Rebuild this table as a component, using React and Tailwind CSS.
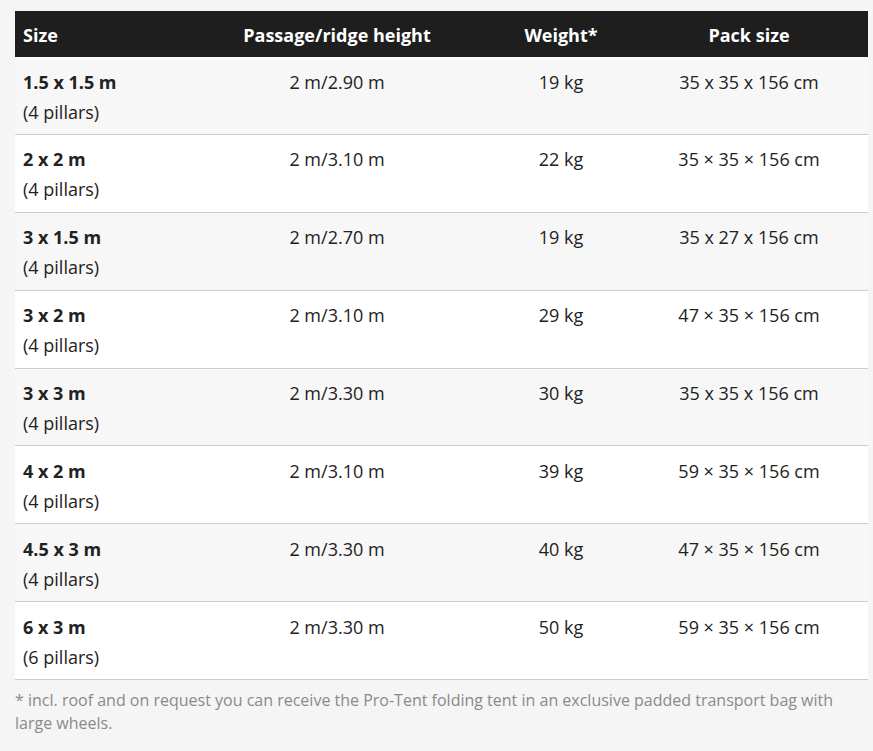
import React from "react"

const rows = [
  { size: '1.5 x 1.5 m', pillars: '(4 pillars)', height: '2 m/2.90 m', weight: '19 kg', pack: '35 x 35 x 156 cm' },
  { size: '2 x 2 m', pillars: '(4 pillars)', height: '2 m/3.10 m', weight: '22 kg', pack: '35 × 35 × 156 cm' },
  { size: '3 x 1.5 m', pillars: '(4 pillars)', height: '2 m/2.70 m', weight: '19 kg', pack: '35 x 27 x 156 cm' },
  { size: '3 x 2 m', pillars: '(4 pillars)', height: '2 m/3.10 m', weight: '29 kg', pack: '47 × 35 × 156 cm' },
  { size: '3 x 3 m', pillars: '(4 pillars)', height: '2 m/3.30 m', weight: '30 kg', pack: '35 x 35 x 156 cm' },
  { size: '4 x 2 m', pillars: '(4 pillars)', height: '2 m/3.10 m', weight: '39 kg', pack: '59 × 35 × 156 cm' },
  { size: '4.5 x 3 m', pillars: '(4 pillars)', height: '2 m/3.30 m', weight: '40 kg', pack: '47 × 35 × 156 cm' },
  { size: '6 x 3 m', pillars: '(6 pillars)', height: '2 m/3.30 m', weight: '50 kg', pack: '59 × 35 × 156 cm' },
]

const App = () => {
  return (
    <div className="min-h-screen bg-[#f5f5f5] px-[15px] pt-[11px] pb-6 font-['Open_Sans',sans-serif] text-[#222]">
      <table className="w-[853px] table-fixed border-collapse text-[18px] leading-[30px]">
        <colgroup>
          <col className="w-[167px]" />
          <col className="w-[310px]" />
          <col className="w-[138px]" />
          <col className="w-[238px]" />
        </colgroup>
        <thead>
          <tr className="bg-[#1e1e1e] text-white">
            <th className="px-2 pt-[9px] pb-[7px] text-left font-bold">Size</th>
            <th className="px-2 pt-[9px] pb-[7px] text-center font-bold">Passage/ridge height</th>
            <th className="px-2 pt-[9px] pb-[7px] text-center font-bold">Weight*</th>
            <th className="px-2 pt-[9px] pb-[7px] text-center font-bold">Pack size</th>
          </tr>
        </thead>
        <tbody>
          {rows.map((row, idx) => (
            <tr key={idx} className={`border-b border-[#cccccc] align-top ${idx % 2 === 0 ? 'bg-[#f7f7f7]' : 'bg-white'}`}>
              <td className="px-2 pt-[9.5px] pb-[7.375px] text-left">
                <div className="font-bold">{row.size}</div>
                <div>{row.pillars}</div>
              </td>
              <td className="px-2 pt-[9.5px] text-center">{row.height}</td>
              <td className="px-2 pt-[9.5px] text-center">{row.weight}</td>
              <td className="px-2 pt-[9.5px] text-center">{row.pack}</td>
            </tr>
          ))}
        </tbody>
      </table>
      <p className="mt-[9px] w-[853px] text-[16px] leading-[23px] text-[#8a8a8a]">
        * incl. roof and on request you can receive the Pro-Tent folding tent in an exclusive padded transport bag with large wheels.
      </p>
    </div>
  )
}

export default App
